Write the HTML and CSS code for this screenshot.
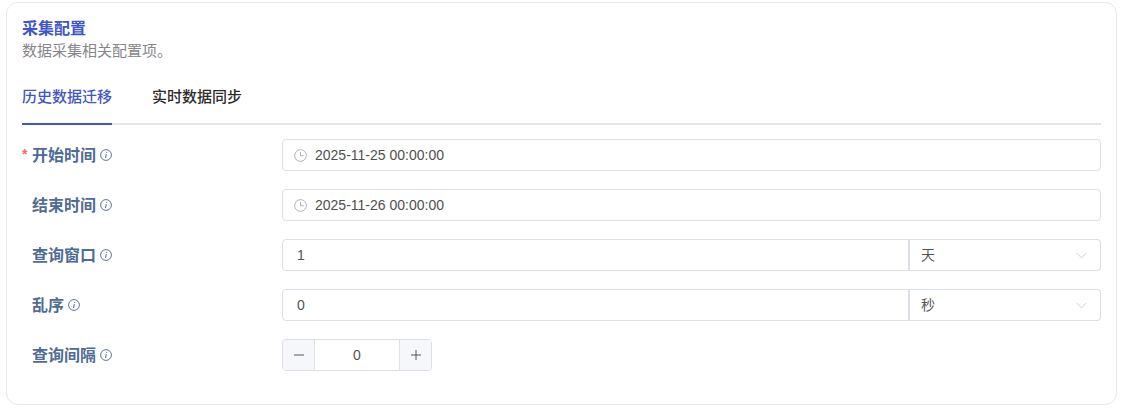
FILE: index.html
```html
<!DOCTYPE html>
<html lang="zh-CN">
<head>
<meta charset="utf-8">
<title>采集配置</title>
<link rel="stylesheet" href="styles.css">
</head>
<body>
<svg class="sprites" width="0" height="0" aria-hidden="true">
  <symbol id="info" viewBox="0 0 12 12">
    <circle cx="6" cy="6" r="5.4" fill="none" stroke="currentColor" stroke-width="0.9"/>
    <path d="M6.7 2.9v1M6.3 5.1 5.5 9" fill="none" stroke="currentColor" stroke-width="1"/>
  </symbol>
  <symbol id="clock" viewBox="0 0 12 12">
    <circle cx="6" cy="6" r="5.4" fill="none" stroke="currentColor" stroke-width="0.85"/>
    <path d="M6 2.8V6.2H9" fill="none" stroke="currentColor" stroke-width="0.85"/>
  </symbol>
  <symbol id="chevron" viewBox="0 0 12 7">
    <path d="M1 1 6 6 11 1" fill="none" stroke="currentColor" stroke-width="1"/>
  </symbol>
  <symbol id="minus" viewBox="0 0 12 12">
    <path d="M1 6H11" fill="none" stroke="currentColor" stroke-width="1"/>
  </symbol>
  <symbol id="plus" viewBox="0 0 12 12">
    <path d="M1 6H11M6 1V11" fill="none" stroke="currentColor" stroke-width="1"/>
  </symbol>
</svg>
<main class="card">
  <h1 class="title">采集配置</h1>
  <p class="subtitle">数据采集相关配置项。</p>
  <nav class="tabs">
    <a class="tab tab-active">历史数据迁移</a>
    <a class="tab">实时数据同步</a>
  </nav>
  <form class="form">
    <div class="row">
      <div class="label"><span class="req">*</span><span class="label-text">开始时间</span><svg class="info"><use href="#info"/></svg></div>
      <div class="field date"><svg class="clock"><use href="#clock"/></svg><span>2025-11-25 00:00:00</span></div>
    </div>
    <div class="row">
      <div class="label"><span class="label-text">结束时间</span><svg class="info"><use href="#info"/></svg></div>
      <div class="field date"><svg class="clock"><use href="#clock"/></svg><span>2025-11-26 00:00:00</span></div>
    </div>
    <div class="row">
      <div class="label"><span class="label-text">查询窗口</span><svg class="info"><use href="#info"/></svg></div>
      <div class="group">
        <div class="field num">1</div>
        <div class="field select"><span class="select-text">天</span><svg class="chevron"><use href="#chevron"/></svg></div>
      </div>
    </div>
    <div class="row">
      <div class="label"><span class="label-text">乱序</span><svg class="info"><use href="#info"/></svg></div>
      <div class="group">
        <div class="field num">0</div>
        <div class="field select"><span class="select-text">秒</span><svg class="chevron"><use href="#chevron"/></svg></div>
      </div>
    </div>
    <div class="row">
      <div class="label"><span class="label-text">查询间隔</span><svg class="info"><use href="#info"/></svg></div>
      <div class="stepper">
        <span class="step"><svg class="step-icon"><use href="#minus"/></svg></span>
        <span class="step-value">0</span>
        <span class="step"><svg class="step-icon"><use href="#plus"/></svg></span>
      </div>
    </div>
  </form>
</main>
</body>
</html>
```
FILE: styles.css
```css
* { box-sizing: border-box; }
html, body { height: 100%; }
body {
  margin: 0;
  padding: 2px 5px 4px 6px;
  background: #fff;
  font-family: "Liberation Sans", "Noto Sans CJK SC", sans-serif;
  font-size: 14px;
  color: #555;
}
.sprites { position: absolute; }
.card {
  height: 403px;
  border: 1px solid #e7e8ec;
  border-radius: 12px;
  padding: 15px 15px 0;
}
.title {
  margin: 0;
  font-size: 16px;
  line-height: 22px;
  font-weight: 700;
  color: #3f55c9;
}
.subtitle {
  margin: 3px 0 0;
  font-size: 15px;
  line-height: 16px;
  color: #86868b;
}
.tabs {
  display: flex;
  gap: 40px;
  height: 52px;
  margin-top: 14px;
  border-bottom: 2px solid #e3e5ea;
}
.tab {
  height: 52px;
  padding-top: 8px;
  font-size: 15px;
  line-height: 32px;
  font-weight: 500;
  color: #2b2b2b;
}
.tab-active {
  color: #3f55c9;
  border-bottom: 2px solid #3f55c9;
}
.form {
  display: flex;
  flex-direction: column;
  gap: 18px;
  margin-top: 14px;
}
.row { display: flex; height: 32px; }
.label {
  position: relative;
  flex: none;
  display: flex;
  align-items: center;
  gap: 4px;
  width: 260px;
  padding-left: 10px;
  font-size: 16px;
  font-weight: 600;
  color: #506b94;
}
.label-text { padding-bottom: 2px; }
.req {
  position: absolute;
  left: 0;
  top: 7px;
  font-size: 14px;
  line-height: 16px;
  color: #f56c6c;
}
.info { width: 12px; height: 12px; color: #4d6487; }
.field {
  display: flex;
  align-items: center;
  height: 32px;
  background: #fff;
  border: 1px solid #dcdfe6;
  border-radius: 4px;
}
.date { flex: 1; padding-left: 11px; gap: 8px; color: #4f4f4f; }
.clock { width: 13px; height: 13px; color: #a8abb2; }
.group { flex: 1; display: flex; }
.num {
  flex: 1;
  padding-left: 14px;
  border-radius: 4px 0 0 4px;
}
.select {
  flex: none;
  width: 193px;
  padding: 0 13px 0 11px;
  margin-left: -1px;
  border-left-width: 2px;
  border-radius: 0 4px 4px 0;
  justify-content: space-between;
}
.select-text { padding-bottom: 2px; }
.chevron { width: 11px; height: 7px; color: #c8cbd2; }
.stepper {
  display: flex;
  width: 150px;
  height: 32px;
  border: 1px solid #dcdfe6;
  border-radius: 4px;
  overflow: hidden;
}
.step {
  flex: none;
  width: 31px;
  display: flex;
  align-items: center;
  justify-content: center;
  background: #f5f7fa;
  color: #555;
}
.step-icon { width: 12px; height: 12px; }
.step-value {
  flex: 1;
  display: flex;
  align-items: center;
  justify-content: center;
  border-left: 1px solid #dcdfe6;
  border-right: 1px solid #dcdfe6;
}
```
